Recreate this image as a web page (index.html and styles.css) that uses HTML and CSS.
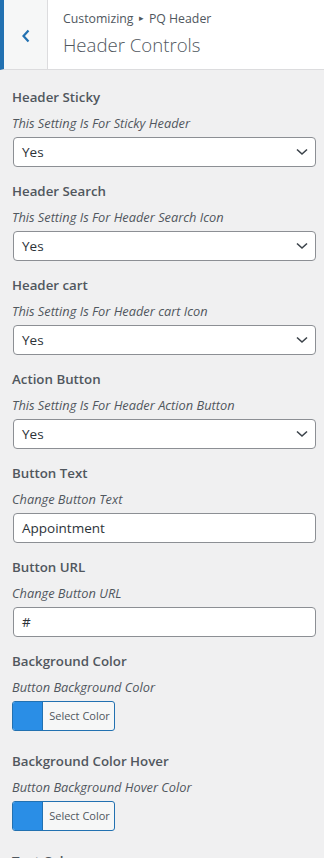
FILE: index.html
```html
<!DOCTYPE html>
<html lang="en">
<head>
<meta charset="utf-8">
<title>Header Controls</title>
<meta name="viewport" content="width=device-width,initial-scale=1">
<link rel="stylesheet" href="styles.css">
</head>
<body>

<!-- ====================== SECTION HEADER ====================== -->
<header class="panel-head">
  <button class="back-btn" aria-label="Back">
    <svg width="10" height="14" viewBox="0 0 10 14"><path d="M7.5 1.5L2.5 7l5 5.5" fill="none" stroke="#2271b1" stroke-width="2.2"/></svg>
  </button>
  <div class="head-titles">
    <span class="crumb">Customizing <span class="arrow">&#9656;</span> PQ Header</span>
    <h1>Header Controls</h1>
  </div>
</header>

<!-- ====================== CONTROLS ====================== -->
<main class="controls">
  <div class="control">
    <label class="title">Header Sticky</label>
    <span class="desc">This Setting Is For Sticky Header</span>
    <div class="select"><span>Yes</span><svg width="12" height="8" viewBox="0 0 12 8"><path d="M1 1.5l5 4.5 5-4.5" fill="none" stroke="#3c434a" stroke-width="1.6"/></svg></div>
  </div>
  <div class="control">
    <label class="title">Header Search</label>
    <span class="desc">This Setting Is For Header Search Icon</span>
    <div class="select"><span>Yes</span><svg width="12" height="8" viewBox="0 0 12 8"><path d="M1 1.5l5 4.5 5-4.5" fill="none" stroke="#3c434a" stroke-width="1.6"/></svg></div>
  </div>
  <div class="control">
    <label class="title">Header cart</label>
    <span class="desc">This Setting Is For Header cart Icon</span>
    <div class="select"><span>Yes</span><svg width="12" height="8" viewBox="0 0 12 8"><path d="M1 1.5l5 4.5 5-4.5" fill="none" stroke="#3c434a" stroke-width="1.6"/></svg></div>
  </div>
  <div class="control">
    <label class="title">Action Button</label>
    <span class="desc">This Setting Is For Header Action Button</span>
    <div class="select"><span>Yes</span><svg width="12" height="8" viewBox="0 0 12 8"><path d="M1 1.5l5 4.5 5-4.5" fill="none" stroke="#3c434a" stroke-width="1.6"/></svg></div>
  </div>
  <div class="control">
    <label class="title">Button Text</label>
    <span class="desc">Change Button Text</span>
    <div class="input">Appointment</div>
  </div>
  <div class="control">
    <label class="title">Button URL</label>
    <span class="desc">Change Button URL</span>
    <div class="input">#</div>
  </div>
  <div class="control color-control">
    <label class="title">Background Color</label>
    <span class="desc">Button Background Color</span>
    <button class="color-btn"><span class="swatch"></span><span class="color-txt">Select Color</span></button>
  </div>
  <div class="control color-control">
    <label class="title">Background Color Hover</label>
    <span class="desc">Button Background Hover Color</span>
    <button class="color-btn"><span class="swatch"></span><span class="color-txt">Select Color</span></button>
  </div>
  <div class="control color-control">
    <label class="title">Text Color</label>
    <span class="desc">Button Text Color</span>
    <button class="color-btn"><span class="swatch"></span><span class="color-txt">Select Color</span></button>
  </div>
</main>

</body>
</html>
```

FILE: styles.css
```css
/* ---------- Base ---------- */
*{margin:0;padding:0;box-sizing:border-box}
html,body{background:#f0f0f1;color:#50575e;font-family:"Open Sans","Noto Sans",sans-serif;overflow:hidden}
/* ---------- Section header ---------- */
.panel-head{display:flex;height:70px;background:#fff;border-bottom:1px solid #dcdcde;border-left:4px solid #2271b1}
.back-btn{width:44px;flex:none;display:flex;align-items:center;justify-content:center;background:#f6f7f7;
  border:none;border-right:1px solid #dcdcde;padding-top:2px}
.head-titles{display:flex;flex-direction:column;padding:8px 0 0 15px}
.crumb{font-size:12.3px;line-height:20px;color:#50575e}
.crumb .arrow{font-size:9px;vertical-align:2px;margin:0 2px}
.head-titles h1{font-size:18.6px;font-weight:300;line-height:28px;color:#50575e;margin-top:2px}
/* ---------- Controls ---------- */
.controls{padding:15px 8px 0 12px}
.control{display:flex;flex-direction:column;margin-bottom:12px}
.color-control{margin-bottom:18px}
.title{font-size:13.3px;font-weight:600;line-height:24px;color:#50575e}
.desc{font-size:12.8px;font-style:italic;line-height:24px;margin:2px 0}
.select,.input{height:30px;background:#fff;border:1px solid #8c8f94;border-radius:4px;margin-left:1px;
  display:flex;align-items:center;padding:0 8px;font-size:13.5px;color:#2c3338}
.select{justify-content:space-between;padding-right:7px}
.color-btn{display:flex;align-self:flex-start;width:103px;height:30px;border:1px solid #2271b1;border-radius:3px;
  background:#f6f7f7;overflow:hidden;font-family:inherit;cursor:pointer}
.swatch{width:30px;height:100%;background:#2a8ee6;border-right:1px solid #2271b1}
.color-txt{flex:1;font-size:11px;line-height:28px;color:#50575e;text-align:center;padding-left:2px}
```
